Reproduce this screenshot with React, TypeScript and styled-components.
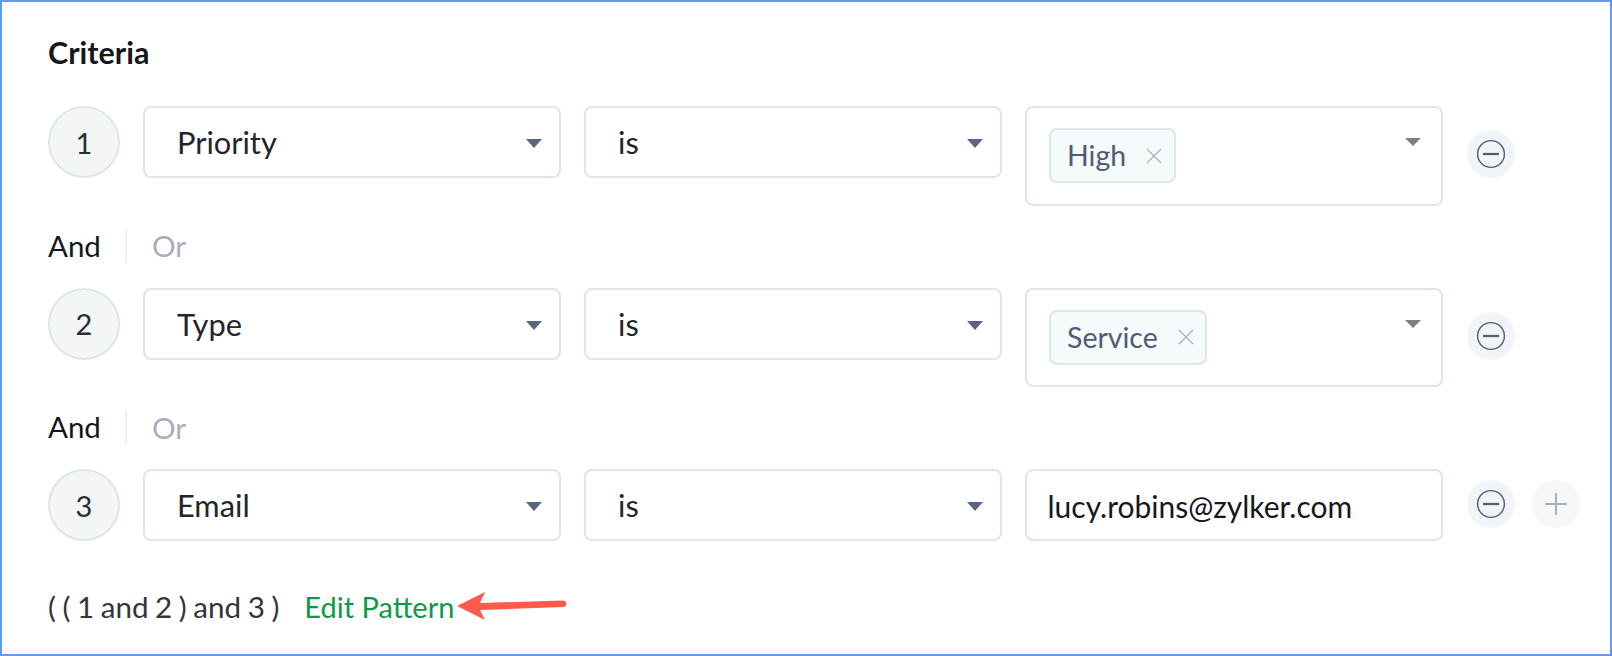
import React from "react";
import styled, { createGlobalStyle } from "styled-components";

const Global = createGlobalStyle`
  html, body { margin: 0; padding: 0; background: #fff; }
  body { font-family: Lato, "Noto Sans", sans-serif; }
`;

const Panel = styled.div`
  box-sizing: border-box;
  width: 1612px;
  height: 656px;
  border: 2px solid #619bf5;
  padding: 33px 0 0 46px;
  background: #fff;
  font-family: Lato, sans-serif;
  -webkit-font-smoothing: antialiased;
`;

const Title = styled.h2`
  margin: 0 0 37px;
  font-size: 30.5px;
  line-height: 34px;
  font-weight: 700;
  color: #15171c;
`;

const Row = styled.div`
  display: flex;
  align-items: flex-start;
`;

const Step = styled.div`
  box-sizing: border-box;
  flex: none;
  width: 72px;
  height: 72px;
  margin-right: 23px;
  border: 2px solid #dde6ea;
  border-radius: 50%;
  background: #f4f6f6;
  color: #2b2d33;
  font-size: 29px;
  display: flex;
  align-items: center;
  justify-content: center;
`;

const Field = styled.div`
  box-sizing: border-box;
  position: relative;
  flex: none;
  width: 418px;
  height: 72px;
  margin-right: 23px;
  padding: 0 32px;
  border: 2px solid #dde6ea;
  border-radius: 8px;
  background: #fff;
  color: #23252c;
  font-size: 30.8px;
  line-height: 70px;
`;

const TagField = styled(Field)`
  height: 99.5px;
  margin-right: 24px;
  padding: 20px 22px;
  line-height: 1;
`;

const EmailField = styled(Field)`
  margin-right: 24px;
  padding: 0 20.5px;
  color: #15171c;
  font-size: 30px;
`;

const Caret = styled.span<{ $muted?: boolean }>`
  position: absolute;
  right: ${(p) => (p.$muted ? "20px" : "17px")};
  top: ${(p) => (p.$muted ? "30px" : "31px")};
  width: 0;
  height: 0;
  border-style: solid;
  border-width: ${(p) => (p.$muted ? "8px 8px 0" : "9px 8px 0")};
  border-color: ${(p) => (p.$muted ? "#7f7f7f" : "#5a6583")} transparent transparent;
`;

const Tag = styled.span`
  box-sizing: border-box;
  display: inline-flex;
  align-items: center;
  height: 55px;
  padding: 0 11.5px 0 16px;
  gap: 20px;
  border: 2px solid #dde6ea;
  border-radius: 8px;
  background: #f5fafa;
  color: #4f5b78;
  font-size: 28.5px;
  line-height: 1;
`;

const Actions = styled.div<{ $offset: number }>`
  display: flex;
  gap: 17px;
  margin-top: ${(p) => p.$offset}px;
`;

const RoundButton = styled.button<{ $faint?: boolean }>`
  box-sizing: border-box;
  width: 48px;
  height: 48px;
  padding: 0;
  border: 0;
  border-radius: 50%;
  background: ${(p) => (p.$faint ? "#f6f8f8" : "#f2f5f7")};
  color: ${(p) => (p.$faint ? "#a9aebd" : "#4f5b78")};
  display: flex;
  align-items: center;
  justify-content: center;
`;

const Logic = styled.div`
  display: flex;
  align-items: center;
  height: 82px;
  padding-bottom: 2px;
  box-sizing: border-box;
  font-size: 29.5px;
`;

const And = styled.span`
  color: #15171c;
  padding-right: 24px;
  border-right: 2px solid #edf0f2;
  line-height: 34px;
`;

const Or = styled.span`
  color: #a9aebd;
  padding-left: 25px;
`;

const Footer = styled.div`
  display: flex;
  align-items: center;
  margin-top: 45px;
  height: 40px;
  font-size: 29px;
`;

const Pattern = styled.span`
  color: #33353a;
  margin-right: 25px;
  font-size: 29.6px;
  word-spacing: -1px;
`;

const EditLink = styled.a`
  color: #0c9a47;
`;

const ArrowIcon = styled.svg`
  flex: none;
  display: block;
  margin-left: 3px;
`;

const MinusIcon = () => (
  <svg width="30" height="30" viewBox="0 0 30 30" fill="none" stroke="currentColor">
    <circle cx="15" cy="15" r="13.4" strokeWidth="1.4" />
    <path d="M7 15h16" strokeWidth="2.2" />
  </svg>
);

const PlusIcon = () => (
  <svg width="24" height="24" viewBox="0 0 24 24" fill="none" stroke="currentColor" strokeWidth="2">
    <path d="M12 1v22M1 12h22" />
  </svg>
);

const CloseIcon = () => (
  <svg width="16" height="16" viewBox="0 0 16 16" fill="none" stroke="#a9aebd" strokeWidth="1.2">
    <path d="M1 1l14 14M15 1L1 15" />
  </svg>
);

type RowData = { n: number; field: string; tag?: string; email?: string; plus?: boolean };

const rows: RowData[] = [
  { n: 1, field: "Priority", tag: "High" },
  { n: 2, field: "Type", tag: "Service" },
  { n: 3, field: "Email", email: "lucy.robins@zylker.com", plus: true },
];

export default function App() {
  return (
    <>
      <Global />
      <Panel>
        <Title>Criteria</Title>
        {rows.map((r, i) => (
          <React.Fragment key={r.n}>
            <Row>
              <Step>{r.n}</Step>
              <Field>
                {r.field}
                <Caret />
              </Field>
              <Field>
                is
                <Caret />
              </Field>
              {r.tag ? (
                <TagField>
                  <Tag>
                    {r.tag}
                    <CloseIcon />
                  </Tag>
                  <Caret $muted />
                </TagField>
              ) : (
                <EmailField>{r.email}</EmailField>
              )}
              <Actions $offset={r.tag ? 24 : 11}>
                <RoundButton aria-label="Remove">
                  <MinusIcon />
                </RoundButton>
                {r.plus && (
                  <RoundButton $faint aria-label="Add">
                    <PlusIcon />
                  </RoundButton>
                )}
              </Actions>
            </Row>
            {i < 2 && (
              <Logic>
                <And>And</And>
                <Or>Or</Or>
              </Logic>
            )}
          </React.Fragment>
        ))}
        <Footer>
          <Pattern>( ( 1 and 2 ) and 3 )</Pattern>
          <EditLink>Edit Pattern</EditLink>
          <ArrowIcon width="110" height="30" viewBox="0 0 110 30">
            <path d="M0 15L28 1L23 12L106 9.5a3 3 0 0 1 0 6.5L23 19L28 29Z" fill="#ff5a4c" />
          </ArrowIcon>
        </Footer>
      </Panel>
    </>
  );
}
